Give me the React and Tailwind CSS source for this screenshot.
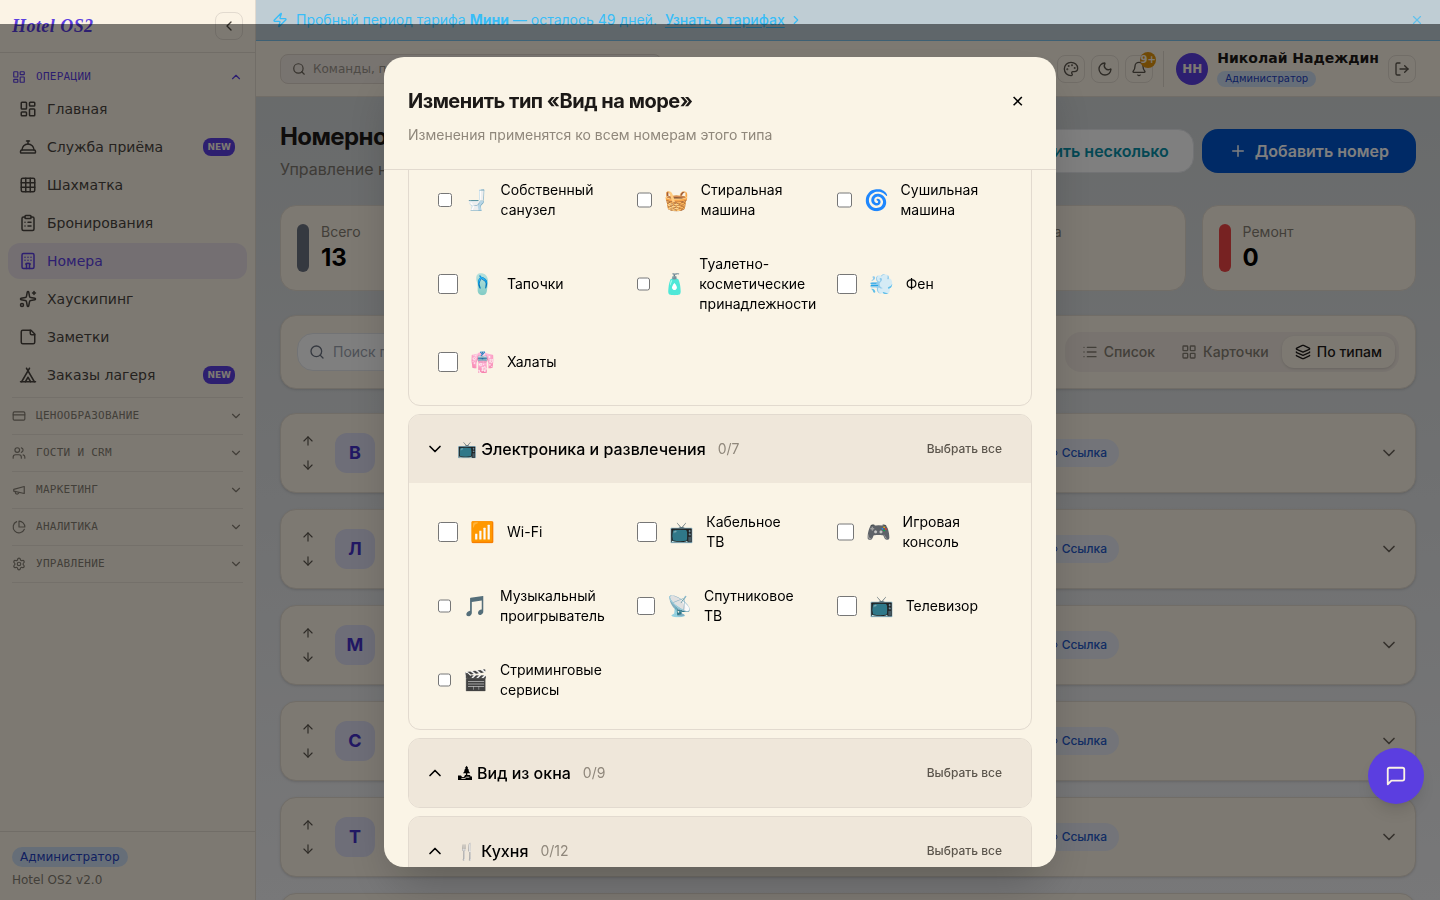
import { useEffect, useRef } from "react";
import {
  ArrowDown,
  ArrowUp,
  Bell,
  ChevronDown,
  ChevronLeft,
  ChevronRight,
  ChevronUp,
  ClipboardList,
  ConciergeBell,
  CreditCard,
  Grid3x3,
  Hotel,
  Layers,
  LayoutDashboard,
  LayoutGrid,
  Link2,
  List,
  LogOut,
  Moon,
  Palette,
  Plus,
  Search,
  Settings,
  Sparkles,
  Tent,
  Users,
  X,
  Zap,
} from "lucide-react";

function Drawing({ size, children }) {
  return (
    <svg
      width={size}
      height={size}
      viewBox="0 0 24 24"
      fill="none"
      stroke="currentColor"
      strokeWidth="2"
      strokeLinecap="round"
      strokeLinejoin="round"
      className="shrink-0"
      aria-hidden="true"
    >
      {children}
    </svg>
  );
}

const Note = ({ size }) => (
  <Drawing size={size}>
    <path d="M16 3H5a2 2 0 0 0-2 2v14a2 2 0 0 0 2 2h14a2 2 0 0 0 2-2V8Z" />
    <path d="M15 3v4a2 2 0 0 0 2 2h4" />
  </Drawing>
);

const Horn = ({ size }) => (
  <Drawing size={size}>
    <path d="m3 11 18-5v12L3 14v-3z" />
    <path d="M11.6 16.8a3 3 0 1 1-5.8-1.6" />
  </Drawing>
);

const Pie = ({ size }) => (
  <Drawing size={size}>
    <path d="M21.21 15.89A10 10 0 1 1 8 2.83" />
    <path d="M22 12A10 10 0 0 0 12 2v10z" />
  </Drawing>
);

const Bubble = ({ size }) => (
  <Drawing size={size}>
    <path d="M21 15a2 2 0 0 1-2 2H7l-4 4V5a2 2 0 0 1 2-2h14a2 2 0 0 1 2 2z" />
  </Drawing>
);

const Landscape = () => (
  <svg width="16" height="16" viewBox="0 0 16 16" fill="currentColor" aria-hidden="true">
    <path d="M9.6 0.8 L11.2 3 H10.5 L12.2 5.4 H11.3 L13.2 8.2 H10.3 V10 H8.9 V8.2 H6 L7.9 5.4 H7 L8.7 3 H8 Z" />
    <path d="M1 10.6 H4 L5 12 H7 L8 10 H13 L13.6 11.6 H15 V15 H1 Z" />
    <path d="M4.4 13.4 H8 L9.4 12.2 H12.4" fill="none" stroke="#efe7da" strokeWidth="0.9" />
  </svg>
);

const navItems = [
  { label: "Главная", Icon: LayoutDashboard },
  { label: "Служба приёма", Icon: ConciergeBell, isNew: true },
  { label: "Шахматка", Icon: Grid3x3 },
  { label: "Бронирования", Icon: ClipboardList },
  { label: "Номера", Icon: Hotel, active: true },
  { label: "Хаускипинг", Icon: Sparkles },
  { label: "Заметки", Icon: Note },
  { label: "Заказы лагеря", Icon: Tent, isNew: true },
];

const navSections = [
  { label: "ЦЕНООБРАЗОВАНИЕ", Icon: CreditCard },
  { label: "ГОСТИ И CRM", Icon: Users },
  { label: "МАРКЕТИНГ", Icon: Horn },
  { label: "АНАЛИТИКА", Icon: Pie },
  { label: "УПРАВЛЕНИЕ", Icon: Settings },
];

function Sidebar() {
  return (
    <aside className="flex w-64 shrink-0 flex-col border-r border-[#e2dacf] bg-[#fbf3e5] font-['DejaVu_Sans',sans-serif]">
      <div className="flex items-center justify-between border-b border-[#e2dacf] p-3">
        <span className="font-['Liberation_Serif',serif] text-lg leading-7 font-bold tracking-wide text-[#5b3ee0] italic">
          Hotel OS2
        </span>
        <button
          type="button"
          aria-label="Свернуть меню"
          className="flex size-7 items-center justify-center rounded-lg border border-[#e2dacf] text-[#4a443c]"
        >
          <ChevronLeft size={16} />
        </button>
      </div>
      <nav className="flex-1 overflow-hidden pt-2.5 pb-2">
        <button
          type="button"
          className="flex h-7 w-full items-center gap-2.5 px-3 font-['DejaVu_Sans_Mono',monospace] text-[11px] tracking-wide text-[#5b3ee0]"
        >
          <LayoutDashboard size={14} />
          ОПЕРАЦИИ
          <ChevronUp size={14} className="ml-auto" />
        </button>
        <ul className="flex flex-col gap-0.5 px-2 pb-1">
          {navItems.map(({ label, Icon, isNew, active }) => (
            <li key={label}>
              <a
                href="#"
                className={
                  active
                    ? "flex h-9 items-center gap-2.5 rounded-xl bg-[#e8dfe4] pr-3 pl-[11px] text-sm text-[#5b3ee0]"
                    : "flex h-9 items-center gap-2.5 rounded-xl pr-3 pl-[11px] text-sm text-[#4a453f]"
                }
              >
                <Icon size={18} />
                {label}
                {isNew && (
                  <span className="ml-auto flex h-[18px] items-center rounded-lg bg-[#5b3ee0] px-1 text-[9px] font-bold text-[#fbf3e5]">
                    NEW
                  </span>
                )}
              </a>
            </li>
          ))}
        </ul>
        <ul className="mx-3 border-b border-[#e8e0d4]">
          {navSections.map(({ label, Icon }) => (
            <li key={label} className="border-t border-[#e8e0d4]">
              <button
                type="button"
                className="flex h-9 w-full items-center gap-2.5 font-['DejaVu_Sans_Mono',monospace] text-[11px] tracking-wide text-[#857e73]"
              >
                <Icon size={14} />
                {label}
                <ChevronDown size={14} className="ml-auto" />
              </button>
            </li>
          ))}
        </ul>
      </nav>
      <div className="flex flex-col items-start gap-[5px] border-t border-[#e2dacf] px-3 pt-[15px] pb-3 text-xs">
        <span className="rounded-full bg-[#cdddf0] px-2 py-0.5 text-[#2240c0]">
          Администратор
        </span>
        <span className="text-[#857e73]">Hotel OS2 v2.0</span>
      </div>
    </aside>
  );
}

function TrialBanner() {
  return (
    <div className="flex h-[41px] shrink-0 items-center gap-2 border-b border-[#7cc0e8] bg-[#bfcdd4] px-4 text-sm text-[#38bdf8]">
      <Zap size={16} />
      <span>
        Пробный период тарифа <strong className="font-bold">Мини</strong> — осталось 49 дней.
      </span>
      <a href="#" className="flex items-center gap-1 font-medium underline underline-offset-2">
        Узнать о тарифах
        <ChevronRight size={14} />
      </a>
      <button type="button" aria-label="Закрыть" className="ml-auto opacity-70">
        <X size={14} />
      </button>
    </div>
  );
}

const squareButton =
  "relative flex size-7 items-center justify-center rounded-lg border border-[#e2dacf] text-[#5c564d]";

function TopBar() {
  return (
    <header className="flex h-14 shrink-0 items-center justify-between border-b border-[#e2dacf] bg-[#fbf3e5] px-6 font-['DejaVu_Sans',sans-serif]">
      <label className="flex h-[30px] w-[382px] items-center gap-[7px] rounded-lg border border-[#ddd3c8] bg-[#f1e8e0] px-[11px] text-[#6b645a]">
        <Search size={14} />
        <input
          type="search"
          aria-label="Команды"
          placeholder="Команды, поиск"
          className="min-w-0 flex-1 bg-transparent text-xs outline-none placeholder:text-[#9a948b]"
        />
      </label>
      <div className="flex items-center">
        <div className="flex items-center gap-1.5">
          <button type="button" aria-label="Оформление" className={squareButton}>
            <Palette size={16} />
          </button>
          <button type="button" aria-label="Тёмная тема" className={squareButton}>
            <Moon size={16} />
          </button>
          <button type="button" aria-label="Уведомления" className={squareButton}>
            <Bell size={16} />
            <span className="absolute -top-1 -right-1 flex size-4 items-center justify-center rounded-full bg-[#e0920c] text-[10px] font-bold text-[#fbf3e5]">
              9+
            </span>
          </button>
        </div>
        <div className="mr-3 ml-2.5 h-9 w-px bg-[#ded6ca]" />
        <span className="flex size-8 items-center justify-center rounded-full bg-[#5b3ee0] text-xs font-bold text-[#fbf3e5]">
          НН
        </span>
        <div className="mx-[9px] flex flex-col items-start">
          <span className="text-sm leading-4 font-bold text-[#1c1917]">Николай Надеждин</span>
          <span className="mt-[5px] rounded-full bg-[#cdddf0] px-2 text-[10px] leading-4 text-[#2240c0]">
            Администратор
          </span>
        </div>
        <button type="button" aria-label="Выйти" className={squareButton}>
          <LogOut size={16} />
        </button>
      </div>
    </header>
  );
}

const stats = [
  { label: "Всего", value: 13, bar: "h-12 w-3 rounded-full bg-[#6b7280]" },
  { label: "Свободно", value: 13, bar: "h-12 w-3 rounded-full bg-[#22c55e]" },
  { label: "Занято", value: 0, bar: "h-12 w-3 rounded-full bg-[#3b82f6]" },
  { label: "Уборка", value: 0, bar: "h-12 w-3 rounded-full bg-[#eab308]" },
  { label: "Ремонт", value: 0, bar: "h-12 w-3 rounded-full bg-[#ef4444]" },
];

const roomTypes = ["В", "Л", "М", "С", "Т", "У"];

function RoomsPage() {
  return (
    <main className="flex flex-1 flex-col gap-6 overflow-hidden bg-linear-to-b from-[#d2d6d7] via-[#e0e2e4] to-[#f0f0f2] p-6">
      <div className="flex items-center justify-between">
        <div>
          <h1 className="text-2xl font-bold tracking-tight text-[#1c1917]">Номерной фонд</h1>
          <p className="mt-1 text-base text-[#7d776e]">Управление номерами</p>
        </div>
        <div className="flex gap-2">
          <button
            type="button"
            className="flex h-11 items-center gap-2 rounded-2xl border border-[#e5e7eb] bg-white px-6 text-base font-semibold text-[#0891a8]"
          >
            Добавить несколько
          </button>
          <button
            type="button"
            className="flex h-11 items-center gap-2 rounded-2xl bg-[#0054cc] px-[27px] text-base font-semibold text-white"
          >
            <Plus size={18} />
            Добавить номер
          </button>
        </div>
      </div>

      <div className="grid grid-cols-5 gap-4">
        {stats.map((s) => (
          <div key={s.label} className="flex items-center gap-3 rounded-2xl border border-[#e2dacf] bg-[#fbf3e5] p-4">
            <span className={s.bar} />
            <div>
              <div className="text-sm text-[#857e73]">{s.label}</div>
              <div className="text-2xl font-bold text-black">{s.value}</div>
            </div>
          </div>
        ))}
      </div>

      <div className="flex items-center justify-between rounded-2xl border border-[#e2dacf] bg-[#fbf3e5] p-4 shadow-sm">
        <label className="flex h-[38px] w-96 items-center gap-2 rounded-2xl border border-[#e5e7eb] bg-white px-[11px] text-[#6b7280]">
          <Search size={16} />
          <input
            type="search"
            aria-label="Поиск"
            placeholder="Поиск по номеру"
            className="min-w-0 flex-1 bg-transparent text-sm outline-none placeholder:text-[#9ca3af]"
          />
        </label>
        <div className="flex items-center rounded-2xl bg-[#f0e7de] p-1 text-sm font-medium text-[#857e73]">
          <button type="button" className="flex h-8 items-center gap-1.5 rounded-xl px-[13px]">
            <List size={16} />
            Список
          </button>
          <button type="button" className="flex h-8 items-center gap-1.5 rounded-xl px-[13px]">
            <LayoutGrid size={16} />
            Карточки
          </button>
          <button
            type="button"
            className="flex h-8 items-center gap-1.5 rounded-xl bg-[#fbf3e5] px-[13px] text-[#1c1917] shadow-sm"
          >
            <Layers size={16} />
            По типам
          </button>
        </div>
      </div>

      <ul className="flex flex-col gap-4">
        {roomTypes.map((letter) => (
          <li
            key={letter}
            className="flex h-20 shrink-0 items-center rounded-2xl border border-[#e2dacf] bg-[#fbf3e5] px-4 shadow-sm"
          >
            <div className="flex w-[22px] flex-col items-center gap-2.5 text-[#5c564d]">
              <button type="button" aria-label="Выше">
                <ArrowUp size={14} />
              </button>
              <button type="button" aria-label="Ниже">
                <ArrowDown size={14} />
              </button>
            </div>
            <span className="ml-4 flex size-10 items-center justify-center rounded-xl bg-[#dcdcf0] text-lg font-bold text-[#4430c8]">
              {letter}
            </span>
            <a
              href="#"
              className="mr-60 ml-auto flex h-7 items-center gap-1 rounded-full bg-[#e6e9f2] px-3 text-xs font-medium text-[#2458c8]"
            >
              <Link2 size={12} />
              Ссылка
            </a>
            <button type="button" aria-label="Развернуть" className="ml-5 text-[#6b645a]">
              <ChevronDown size={20} />
            </button>
          </li>
        ))}
      </ul>
    </main>
  );
}

const bathroom = [
  ["🚽", "Собственный санузел"],
  ["🧺", "Стиральная машина"],
  ["🌀", "Сушильная машина"],
  ["🩴", "Тапочки"],
  ["🧴", "Туалетно-косметические принадлежности"],
  ["💨", "Фен"],
  ["👘", "Халаты"],
];

const electronics = [
  ["📶", "Wi-Fi"],
  ["📺", "Кабельное ТВ"],
  ["🎮", "Игровая консоль"],
  ["🎵", "Музыкальный проигрыватель"],
  ["📡", "Спутниковое ТВ"],
  ["📺", "Телевизор"],
  ["🎬", "Стриминговые сервисы"],
];

function Amenities({ items }) {
  return (
    <div className="grid grid-cols-3 gap-2 p-4">
      {items.map(([emoji, label]) => (
        <label
          key={label}
          className="flex items-center gap-3 rounded-lg border border-transparent p-3 text-sm text-black"
        >
          <input type="checkbox" className="size-5" />
          <span className="text-xl">{emoji}</span>
          <span>{label}</span>
        </label>
      ))}
    </div>
  );
}

function Category({ icon, title, count, open, children }) {
  const Chevron = open ? ChevronDown : ChevronUp;
  return (
    <section className="overflow-hidden rounded-xl border border-[#e2dacf]">
      <div className="flex items-center justify-between bg-[#efe7da] p-4">
        <button type="button" aria-expanded={Boolean(open)} className="flex items-center gap-3 text-black">
          <Chevron size={20} />
          <span className="flex items-center gap-1 text-base font-medium">
            {icon}
            <span>{title}</span>
          </span>
          <span className="text-sm text-[#8f877b]">{count}</span>
        </button>
        <button type="button" className="h-9 px-[13px] text-xs font-medium text-[#5c564d]">
          Выбрать все
        </button>
      </div>
      {children}
    </section>
  );
}

function EditTypeDialog() {
  const body = useRef(null);

  useEffect(() => {
    body.current.scrollTop = 20;
  }, []);

  return (
    <div className="fixed inset-0 z-40 mt-6 flex items-center justify-center bg-black/50">
      <div
        role="dialog"
        aria-modal="true"
        aria-labelledby="dialog-title"
        className="flex h-[90vh] w-full max-w-2xl flex-col overflow-hidden rounded-[20px] bg-[#faf4e6] shadow-2xl"
      >
        <div className="border-b border-[#e2dacf] p-6">
          <div className="flex h-10 items-center justify-between">
            <h2 id="dialog-title" className="text-xl font-bold tracking-tight text-[#1c1917]">
              Изменить тип «Вид на море»
            </h2>
            <button type="button" aria-label="Закрыть" className="h-10 px-2 text-base text-black">
              ✕
            </button>
          </div>
          <p className="mt-1 text-sm text-[#8f877b]">Изменения применятся ко всем номерам этого типа</p>
        </div>
        <div
          ref={body}
          className="flex min-h-0 flex-1 flex-col gap-2 overflow-y-auto px-6 pb-6 [scrollbar-width:none] *:shrink-0"
        >
          <section className="rounded-xl border border-[#e2dacf]">
            <Amenities items={bathroom} />
          </section>
          <Category title="📺 Электроника и развлечения" count="0/7" open>
            <Amenities items={electronics} />
          </Category>
          <Category icon={<Landscape />} title="Вид из окна" count="0/9" />
          <Category title="🍴 Кухня" count="0/12" />
        </div>
      </div>
    </div>
  );
}

export default function App() {
  return (
    <div className="flex h-screen overflow-hidden font-['Inter',sans-serif]">
      <Sidebar />
      <div className="flex min-w-0 flex-1 flex-col">
        <TrialBanner />
        <TopBar />
        <RoomsPage />
      </div>
      <EditTypeDialog />
      <button
        type="button"
        aria-label="Открыть чат"
        className="fixed right-4 bottom-24 z-50 flex size-14 items-center justify-center rounded-full bg-[#5b3ee0] text-[#fbf3e5] shadow-lg"
      >
        <Bubble size={22} />
      </button>
    </div>
  );
}
